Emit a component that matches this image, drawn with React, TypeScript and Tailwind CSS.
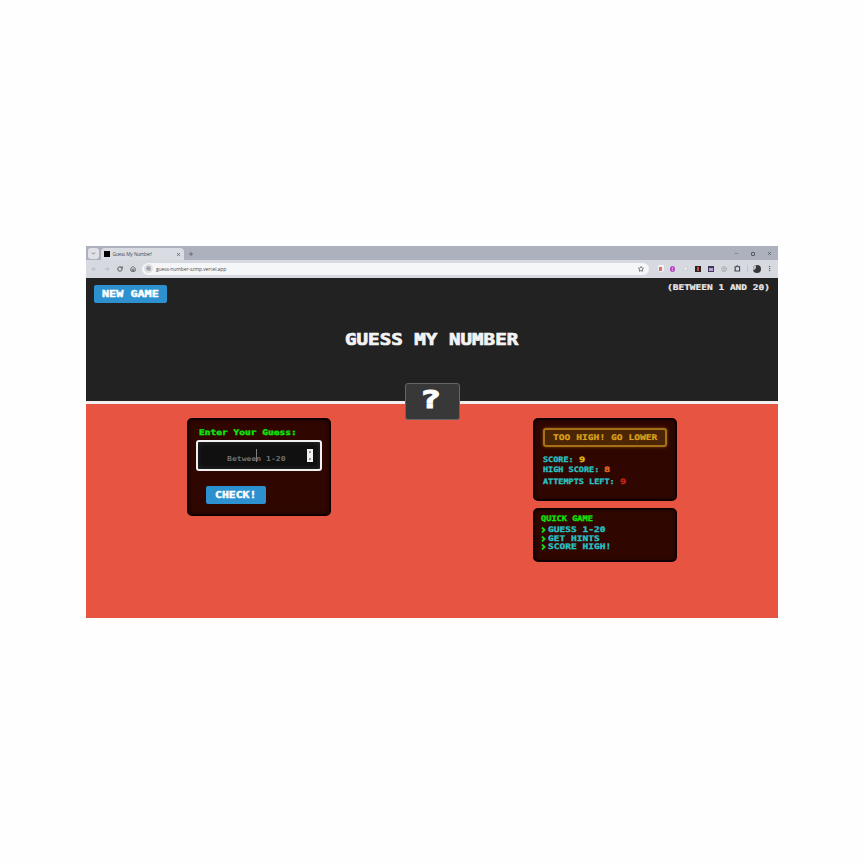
import React from 'react';
import { ArrowLeft, ArrowRight, ChevronDown, CircleUser, House, Minus, MoreVertical, Plus, RotateCw, SlidersHorizontal, Star, X } from 'lucide-react';

type RetroProps = { text: string; size: number; advance: number; className?: string };

// Monospaced arcade lettering, stretched so that every cell is `advance` pixels wide.
function Retro({ text, size, advance, className = 'font-bold' }: RetroProps) {
  return (
    <span
      className={`block shrink-0 whitespace-pre font-['DejaVu_Sans_Mono',monospace] leading-[10px] ${className}`}
      style={{ width: text.length * advance, fontSize: size }}
    >
      <span className="block w-max origin-left" style={{ transform: `scaleX(${advance / (size * 0.602)})` }}>
        {text}
      </span>
    </span>
  );
}

function Browser() {
  return (
    <div className="font-['Open_Sans',sans-serif] text-[#4b4d52]">
      <div className="flex h-[14px] items-end bg-[#adb1be]">
        <div className="mb-[1px] ml-[2px] flex h-[11px] w-[11px] items-center justify-center rounded-[3px] bg-[#dfe1e7]">
          <ChevronDown size={5} strokeWidth={3} />
        </div>
        <div className="ml-[2px] flex h-[12px] w-[83px] items-center rounded-t-[4px] bg-[#dadce3] pl-[3px] pr-[3px]">
          <div className="h-[6px] w-[6px] bg-black" />
          <span className="ml-[2.5px] whitespace-nowrap text-[4.8px] leading-[8px] tracking-[-0.3px] [word-spacing:0.6px]">Guess My Number!</span>
          <X size={5} strokeWidth={3} className="ml-auto" />
        </div>
        <Plus size={6} strokeWidth={2.5} className="mb-[3px] ml-[4px]" />
        <div className="mb-[4px] ml-auto mr-[6px] flex items-center gap-[12px]">
          <Minus size={5} />
          <div className="h-[4px] w-[4px] rounded-[1px] border border-[#55575d]" />
          <X size={5} strokeWidth={3} />
        </div>
      </div>
      <div className="flex h-[18px] items-center bg-[#d7d9e0] pb-px pl-[5px] pr-[5px]">
        <ArrowLeft size={6} className="text-[#a0a2a9]" />
        <ArrowRight size={6} className="ml-[7px] text-[#a0a2a9]" />
        <RotateCw size={6} strokeWidth={3.5} className="ml-[7px]" />
        <House size={6} strokeWidth={3} className="ml-[7px]" />
        <div className="ml-[6px] flex h-[12px] w-[507px] items-center rounded-full bg-[#f5f6f8] pl-[2px] pr-[5px]">
          <div className="flex h-[9px] w-[9px] items-center justify-center rounded-full bg-[#dfe1e6]">
            <SlidersHorizontal size={5} />
          </div>
          <span className="ml-[3px] whitespace-nowrap text-[5px] leading-[8px] tracking-[-0.1px]">guess-number-szmp.vercel.app</span>
          <Star size={6} strokeWidth={3} className="ml-auto" />
        </div>
        <div className="ml-auto flex items-center">
          <div className="mr-[6px] flex h-[7px] w-[6px] items-center justify-center rounded-b-full bg-[#f0eff1]">
            <div className="h-[4px] w-[3px] bg-[#cf7374]" />
          </div>
          <div className="mr-[8px] flex h-[6px] w-[5px] items-center justify-center rounded-full bg-[#b34bc7]">
            <div className="h-[4px] w-px bg-[#d78fe3]" />
          </div>
          <div className="mr-[7px] h-[5px] w-[5px] rounded-full border border-dotted border-[#bfc0c7] bg-[#e6e7eb]" />
          <div className="mr-[7px] flex h-[6px] w-[6px] items-start justify-center bg-[#292022] pt-px">
            <div className="h-[4px] w-[2px] bg-[#d44743]" />
          </div>
          <div className="mr-[7px] flex h-[6px] w-[6px] items-end justify-center bg-[#3f3754] pb-px">
            <div className="h-[3px] w-[4px] bg-[#b9a1d6]" />
          </div>
          <CircleUser size={6} className="mr-[7px] text-[#92949a]" />
          <svg viewBox="0 0 7 7" className="mr-[6px] h-[7px] w-[7px]" fill="none" stroke="#45474c" strokeWidth="1.1">
            <path d="M1 1.7h1.4q.9-1.7 1.8 0h1.4v4.3H1V4.9q1-.9 0-1.8z" />
          </svg>
          <div className="mr-[5px] h-[7px] w-px bg-[#c2c4cc]" />
          <div className="mr-[5px] flex h-[8px] w-[8px] overflow-hidden rounded-full bg-[#35373c]">
            <div className="h-[5px] w-[3px] rounded-br-full bg-[#c3bfc0]" />
          </div>
          <MoreVertical size={7} />
        </div>
      </div>
    </div>
  );
}

const card = 'rounded-[5px] border-2 border-[#100100] bg-[#300700] shadow-[inset_0_0_4px_#1c0300]';

function GuessCard() {
  return (
    <section className={`h-[98px] w-[144px] pl-[7px] pt-[8px] ${card}`}>
      <Retro
        text="Enter Your Guess:"
        size={7.8}
        advance={5.75}
        className="ml-[3px] font-bold text-[#0be80b] [-webkit-text-stroke:0.35px_#0be80b]"
      />
      <div className="mt-[2px] flex h-[31px] w-[126px] items-center rounded-[3px] border-2 border-[#f0f0f0] bg-[#101010] pl-[29px] pr-[7px] shadow-[inset_0_0_5px_#2d2d2d]">
        <div className="relative mt-[7px]">
          <Retro text="Between 1-20" size={6.8} advance={4.88} className="font-bold text-[#707070]" />
          <div className="absolute left-[29px] top-[-5px] h-[13px] w-px bg-[#7c7c7c]" />
        </div>
        <div className="ml-auto flex h-[13px] w-[6px] flex-col items-center justify-between bg-[#f0f0f0] py-[2px]">
          <div className="h-[2px] w-[2px] bg-[#999]" />
          <div className="h-[2px] w-[2px] bg-[#999]" />
        </div>
      </div>
      <button className="ml-[10px] mt-[15px] flex h-[18px] w-[60px] items-center justify-center rounded-[2px] bg-[#2d91d0]">
        <Retro text="CHECK!" size={9} advance={6.9} className="font-bold text-white [-webkit-text-stroke:0.4px_white]" />
      </button>
    </section>
  );
}

function Stat({ label, value, color }: { label: string; value: string; color: string }) {
  return (
    <div className="flex gap-[5px]">
      <Retro
        text={label}
        size={7.5}
        advance={5.12}
        className="font-bold text-[#27c3c7] [-webkit-text-stroke:0.3px_#27c3c7]"
      />
      <Retro text={value} size={7.4} advance={6.2} className={`font-bold [-webkit-text-stroke:0.3px] ${color}`} />
    </div>
  );
}

function ScoreCard() {
  return (
    <section className={`h-[83px] w-[144px] pl-[8px] pt-[8px] ${card}`}>
      <div className="flex h-[19px] w-[124px] items-center justify-center rounded-[3px] border-2 border-[#a47018] bg-[#4c2504] shadow-[0_0_3px_#8a4e0c]">
        <Retro
          text="TOO HIGH! GO LOWER"
          size={7.8}
          advance={5.8}
          className="font-bold text-[#dba21d] [-webkit-text-stroke:0.2px_#dba21d]"
        />
      </div>
      <div className="mt-[8px]">
        <Stat label="SCORE:" value="9" color="text-[#e4b51c]" />
        <Stat label="HIGH SCORE:" value="8" color="text-[#e36a25]" />
        <div className="h-[2px]" />
        <Stat label="ATTEMPTS LEFT:" value="9" color="text-[#cd2017]" />
      </div>
    </section>
  );
}

function RulesCard() {
  return (
    <section className={`h-[54px] w-[144px] pl-[6px] pt-[4px] ${card}`}>
      <Retro
        text="QUICK GAME"
        size={7.6}
        advance={5.2}
        className="font-bold text-[#0be80b] [-webkit-text-stroke:0.3px_#0be80b]"
      />
      <ul className="mt-[1.5px]">
        {['GUESS 1-20', 'GET HINTS', 'SCORE HIGH!'].map((rule) => (
          <li key={rule} className="flex h-[8.7px] items-center">
            <svg viewBox="0 0 5 6" className="h-[6px] w-[5px]" fill="none" stroke="#18dc18" strokeWidth="1.9">
              <path d="M1 .5 3.5 3 1 5.5" />
            </svg>
            <Retro
              text={rule}
              size={7.7}
              advance={5.75}
              className="ml-[2px] font-bold text-[#27c3c7] [-webkit-text-stroke:0.3px_#27c3c7]"
            />
          </li>
        ))}
      </ul>
    </section>
  );
}

export default function App() {
  return (
    <main className="h-[864px] w-[864px] overflow-hidden bg-[#fefefe] pl-[86px] pt-[246px]">
      <div className="w-[691.5px] bg-[#e75441]">
        <Browser />
        <header className="relative h-[126px] border-b-[3px] border-[#f0efee] bg-[#222222] pt-[7px]">
          <div className="flex items-start justify-between pl-[7.5px] pr-[8px]">
            <button className="flex h-[17.5px] w-[73px] items-center justify-center rounded-[2px] bg-[#2d91d0]">
              <Retro text="NEW GAME" size={9} advance={7.1} className="font-bold text-white [-webkit-text-stroke:0.4px_white]" />
            </button>
            <Retro
              text="(BETWEEN 1 AND 20)"
              size={7.8}
              advance={5.72}
              className="-mt-[2.5px] font-bold text-[#eeeaea] [-webkit-text-stroke:0.2px_#eeeaea]"
            />
          </div>
          <div className="mt-[32.5px] flex justify-center">
            <Retro
              text="GUESS MY NUMBER"
              size={15}
              advance={11.55}
              className="font-bold text-[#f3f3f3] [-webkit-text-stroke:0.7px_#f3f3f3]"
            />
          </div>
          <div className="absolute left-[318.5px] top-[105px] flex h-[37px] w-[55px] items-center justify-center rounded-[3px] border border-[#666] bg-[#383838]">
            <Retro
              text="?"
              size={24}
              advance={21}
              className="mb-[3px] mr-[3px] font-bold text-white [-webkit-text-stroke:1.2px_white]"
            />
          </div>
        </header>
        <div className="flex h-[214px] items-start justify-between pl-[101px] pr-[100.5px] pt-[14px]">
          <GuessCard />
          <div className="flex flex-col gap-[7px]">
            <ScoreCard />
            <RulesCard />
          </div>
        </div>
      </div>
    </main>
  );
}
